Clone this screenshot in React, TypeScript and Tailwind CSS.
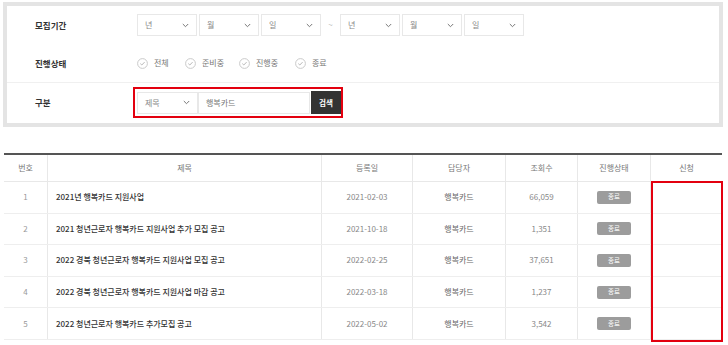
import React from "react";

const font = { fontFamily: '"Noto Sans CJK KR", "Noto Sans", sans-serif' };

function Chevron() {
  return (
    <svg width="7" height="5" viewBox="0 0 7 5" className="shrink-0">
      <path d="M0.8 1 L3.5 3.7 L6.2 1" fill="none" stroke="#777" strokeWidth="1" />
    </svg>
  );
}

function Select({ label, w = "w-[60px]" }: { label: string; w?: string }) {
  return (
    <div className={`${w} h-[22px] border border-[#e8e8e8] bg-white flex items-center justify-between pl-[7px] pr-[7px]`}>
      <span className="text-[8px] text-[#888]">{label}</span>
      <Chevron />
    </div>
  );
}

function CheckCircle() {
  return (
    <svg width="11" height="11" viewBox="0 0 11 11" className="shrink-0">
      <circle cx="5.5" cy="5.5" r="4.9" fill="white" stroke="#c4c4c4" strokeWidth="0.9" />
      <path d="M3.3 5.6 L4.8 7 L7.6 4.1" fill="none" stroke="#b0b0b0" strokeWidth="0.9" />
    </svg>
  );
}

const rows = [
  { n: "1", t: "2021년 행복카드 지원사업", d: "2021-02-03", v: "66,059" },
  { n: "2", t: "2021 청년근로자 행복카드 지원사업 추가 모집 공고", d: "2021-10-18", v: "1,351" },
  { n: "3", t: "2022 경북 청년근로자 행복카드 지원사업 모집 공고", d: "2022-02-25", v: "37,651" },
  { n: "4", t: "2022 경북 청년근로자 행복카드 지원사업 마감 공고", d: "2022-03-18", v: "1,237" },
  { n: "5", t: "2022 청년근로자 행복카드 추가모집 공고", d: "2022-05-02", v: "3,542" },
];

const cols = "grid grid-cols-[44px_274px_91px_93px_72px_73px_71px]";

export default function App() {
  return (
    <div className="w-[728px] h-[345px] bg-white overflow-hidden" style={font}>
      {/* filter panel */}
      <div className="mt-[2px] ml-[3px] w-[720px] h-[125px] border-4 border-[#e4e4e4] flex flex-col">
        <div className="h-[38px] flex items-center">
          <div className="w-[130px] pl-[28px] text-[8.5px] font-semibold text-[#333]">모집기간</div>
          <div className="flex items-center gap-[2px]">
            <Select label="년" />
            <Select label="월" />
            <Select label="일" />
            <span className="w-[15px] text-center text-[8px] text-[#bbb]">~</span>
            <Select label="년" />
            <Select label="월" />
            <Select label="일" />
          </div>
        </div>
        <div className="h-[39px] flex items-center border-b border-[#f0f0f0]">
          <div className="w-[130px] pl-[28px] text-[8.5px] font-semibold text-[#333]">진행상태</div>
          <div className="flex items-center text-[8px] text-[#777]">
            <div className="flex items-center gap-[6px] w-[48px]"><CheckCircle /><span>전체</span></div>
            <div className="flex items-center gap-[6px] w-[54px]"><CheckCircle /><span>준비중</span></div>
            <div className="flex items-center gap-[6px] w-[56px]"><CheckCircle /><span>진행중</span></div>
            <div className="flex items-center gap-[6px]"><CheckCircle /><span>종료</span></div>
          </div>
        </div>
        <div className="h-[39px] flex items-center">
          <div className="w-[130px] pl-[28px] text-[8.5px] font-semibold text-[#333]">구분</div>
          <div className="relative flex items-center">
            <Select label="제목" w="w-[61px]" />
            <div className="w-[112px] h-[22px] border border-[#e8e8e8] flex items-center pl-[7px] text-[8px] text-[#777]">행복카드</div>
            <div className="ml-[1px] w-[30px] h-[23px] bg-[#333] text-white text-[7.5px] font-semibold flex items-center justify-center">검색</div>
            <div className="absolute -left-[4px] -right-[2px] -top-[4px] -bottom-[4px] border-2 border-[#e3000f]" />
          </div>
        </div>
      </div>

      {/* table */}
      <div className="mt-[26px] ml-[4px] w-[718px] border-t-2 border-[#555] relative">
        <div className={`${cols} h-[27px] border-b border-[#e8e8e8] text-[8px] text-[#777]`}>
          {["번호", "제목", "등록일", "담당자", "조회수", "진행상태", "신청"].map((h, i) => (
            <div key={h} className={`flex items-center justify-center ${i < 6 ? "border-r border-[#e8e8e8]" : ""}`}>{h}</div>
          ))}
        </div>
        {rows.map((r) => (
          <div key={r.n} className={`${cols} h-[31.6px] border-b border-[#eeeeee] text-[8px]`}>
            <div className="flex items-center justify-center border-r border-[#e8e8e8] text-[#999]">{r.n}</div>
            <div className="flex items-center pl-[8px] border-r border-[#e8e8e8] text-[#333] font-medium">{r.t}</div>
            <div className="flex items-center justify-center border-r border-[#e8e8e8] text-[#888]">{r.d}</div>
            <div className="flex items-center justify-center border-r border-[#e8e8e8] text-[#666]">행복카드</div>
            <div className="flex items-center justify-center border-r border-[#e8e8e8] text-[#888]">{r.v}</div>
            <div className="flex items-center justify-center border-r border-[#e8e8e8]">
              <span className="w-[34px] h-[13px] rounded-[2px] bg-[#9c9c9c] text-white text-[6.5px] flex items-center justify-center">종료</span>
            </div>
            <div />
          </div>
        ))}
        <div className="absolute left-[647px] w-[72px] top-[26px] h-[161px] border-2 border-[#e3000f]" />
      </div>
    </div>
  );
}
